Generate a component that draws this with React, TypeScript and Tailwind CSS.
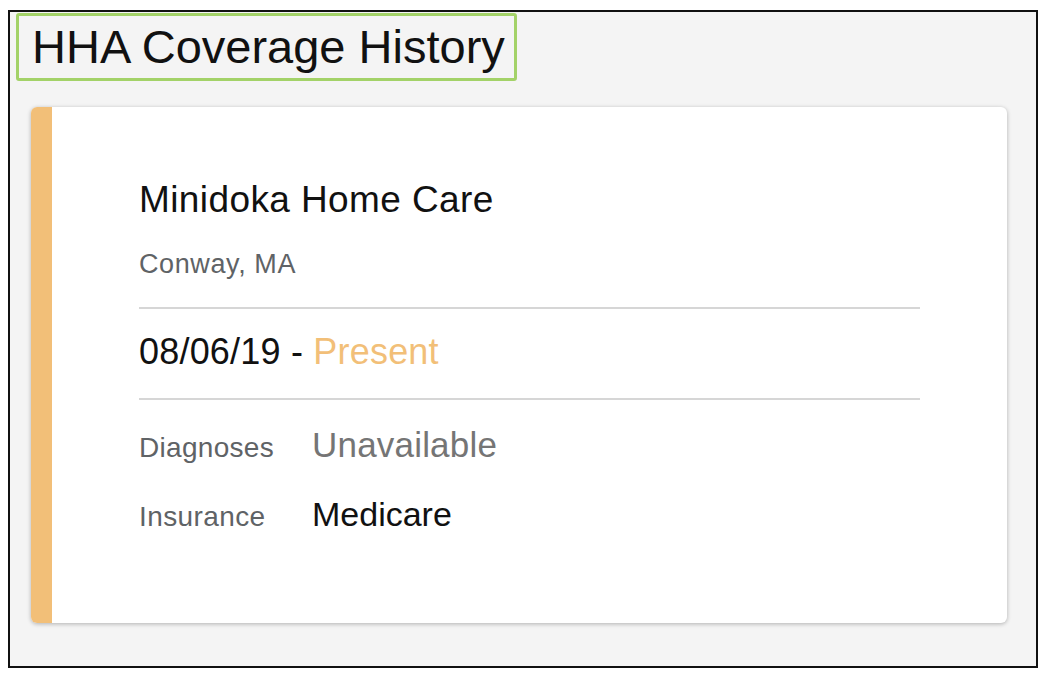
export default function App() {
  return (
    <div className="min-h-[682px] bg-white pl-[8px] pt-[10px] font-['Liberation_Sans',Arial,sans-serif]">
      <div className="w-[1030px] h-[658px] border-2 border-[#111] bg-[#f4f4f4] pl-[6px] pt-px">
        {/* heading */}
        <div className="w-[501px] h-[68px] border-[3px] border-[#a3d268] rounded-[3px] pl-[13px] flex items-center">
          <h1 className="text-[47px] leading-[46px] text-[#111]">HHA Coverage History</h1>
        </div>

        {/* coverage card */}
        <div className="ml-[15px] mt-[26px] w-[976px] h-[516px] flex bg-white rounded-[6px] overflow-hidden shadow-[0_1px_4px_rgba(0,0,0,0.28)]">
          <div className="w-[21px] shrink-0 bg-[#f2bf78]" />
          <div className="flex-1 px-[87px] pt-[73px]">
            <div className="text-[37px] leading-[40px] tracking-[0.4px] text-[#111]">Minidoka Home Care</div>
            <div className="mt-[29px] text-[27px] leading-[30px] tracking-[0.6px] text-[#5f6366]">Conway, MA</div>
            <div className="mt-[28px] h-[2px] bg-[#d6d6d6]" />
            <div className="mt-[23px] text-[36px] leading-[40px] tracking-[0.2px] text-[#111]">
              08/06/19 - <span className="text-[#f2bf78]">Present</span>
            </div>
            <div className="mt-[26px] h-[2px] bg-[#d6d6d6]" />
            <div className="mt-[25px] flex items-baseline">
              <span className="w-[173px] text-[28px] leading-[40px] tracking-[0.3px] text-[#5f6366]">Diagnoses</span>
              <span className="text-[35px] leading-[40px] tracking-[0.2px] text-[#757575]">Unavailable</span>
            </div>
            <div className="mt-[26px] flex items-baseline">
              <span className="w-[173px] text-[28px] leading-[40px] tracking-[0.4px] text-[#5f6366]">Insurance</span>
              <span className="text-[34px] leading-[40px] text-[#111]">Medicare</span>
            </div>
          </div>
        </div>
      </div>
    </div>
  );
}
